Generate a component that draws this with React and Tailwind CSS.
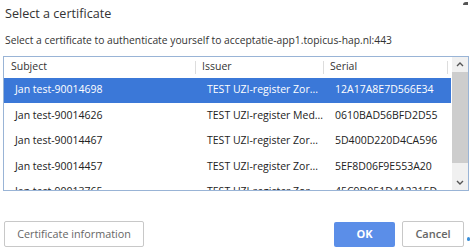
import React from 'react';

const rows = [
    { subject: 'Jan test-90014698', issuer: 'TEST UZI-register Zor...', serial: '12A17A8E7D566E34' },
    { subject: 'Jan test-90014626', issuer: 'TEST UZI-register Med...', serial: '0610BAD56BFD2D55' },
    { subject: 'Jan test-90014467', issuer: 'TEST UZI-register Zor...', serial: '5D400D220D4CA596' },
    { subject: 'Jan test-90014457', issuer: 'TEST UZI-register Zor...', serial: '5EF8D06F9E553A20' },
    { subject: 'Jan test-90013765', issuer: 'TEST UZI-register Zor...', serial: '45C9D051D4A2215D' },
];

export default function App() {
    return (
        <div className="relative w-[474px] h-[251px] bg-white overflow-hidden text-[#222]" style={{ fontFamily: '"Open Sans", "Noto Sans", sans-serif' }}>
            {/* top-right resize glyph */}
            <div className="absolute right-[6px] top-[2px] w-[5px] h-[3px] bg-[#555] rounded-tl-[3px]" />

            <div className="pl-[5px] pt-[4px] text-[12.6px] leading-[20px] text-[#333]">Select a certificate</div>
            <div className="pl-[5px] pt-[8px] text-[10.3px] leading-[16px] text-[#333]">
                Select a certificate to authenticate yourself to acceptatie-app1.topicus-hap.nl:443
            </div>

            {/* list */}
            <div className="ml-[3px] mt-[8px] w-[466px] h-[135px] border border-[#99b4d6] flex overflow-hidden">
                <div className="flex-1 flex flex-col overflow-hidden">
                    <div className="flex h-[20px] shrink-0 items-center text-[10.5px] text-[#333]">
                        <div className="w-[192px] pl-[7px] border-r border-[#ddd] h-[13px] flex items-center">Subject</div>
                        <div className="w-[128px] pl-[6px] border-r border-[#ddd] h-[13px] flex items-center">Issuer</div>
                        <div className="w-[124px] pl-[6px] border-r border-[#ddd] h-[13px] flex items-center">Serial</div>
                    </div>
                    <div className="h-[0.5px] shrink-0" />
                    {rows.map((r, i) => (
                        <div
                            key={r.serial}
                            className={`flex h-[25.5px] shrink-0 items-center text-[10.5px] w-[447px] ${i === 0 ? 'bg-[#3b78d8] text-white' : ''}`}
                        >
                            <div className="w-[192px] pl-[11px] whitespace-nowrap">{r.subject}</div>
                            <div className="w-[128px] pl-[11px] whitespace-nowrap">{r.issuer}</div>
                            <div className="w-[124px] pl-[11px] whitespace-nowrap">{r.serial}</div>
                        </div>
                    ))}
                </div>

                {/* scrollbar */}
                <div className="w-[16px] shrink-0 bg-[#f0f0f0] flex flex-col items-center">
                    <div className="h-[15px] w-full flex items-center justify-center text-[#555]">
                        <svg width="8" height="5" viewBox="0 0 8 5"><path d="M1 4 L4 1 L7 4" fill="none" stroke="currentColor" strokeWidth="1.4" /></svg>
                    </div>
                    <div className="w-full h-[91px] bg-[#cdcdcd]" />
                    <div className="flex-1" />
                    <div className="h-[15px] w-full flex items-center justify-center text-[#555]">
                        <svg width="8" height="5" viewBox="0 0 8 5"><path d="M1 1 L4 4 L7 1" fill="none" stroke="currentColor" strokeWidth="1.4" /></svg>
                    </div>
                </div>
            </div>

            {/* buttons */}
            <div className="flex items-center mt-[30px] px-[4px]">
                <button className="w-[140px] h-[26px] border border-[#c8c8c8] rounded-[2px] bg-white text-[10.8px] text-[#666]">
                    Certificate information
                </button>
                <div className="flex-1" />
                <button className="w-[61px] h-[25px] rounded-[2px] bg-[#5b8ee8] text-white text-[11px] font-bold">OK</button>
                <button className="ml-[7px] w-[62px] h-[26px] border border-[#c8c8c8] rounded-[2px] bg-white text-[11px] font-semibold text-[#666]">
                    Cancel
                </button>
                <div className="w-[3px] h-[4px] ml-[3px] mt-[10px] rounded-full bg-[#3b8fd9]" />
            </div>
        </div>
    );
}
